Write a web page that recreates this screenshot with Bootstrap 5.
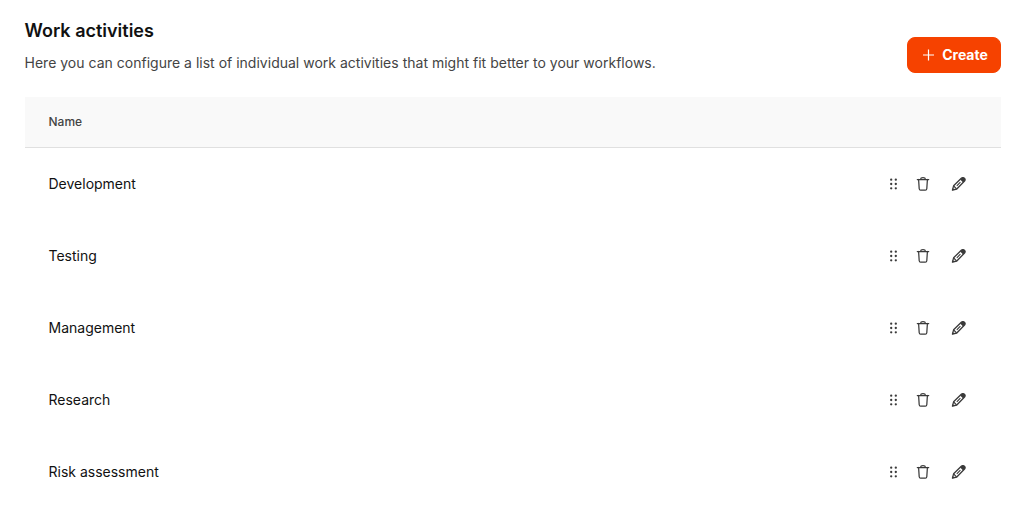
<!DOCTYPE html>
<html lang="en">
<head>
    <meta charset="UTF-8">
    <meta name="viewport" content="width=device-width, initial-scale=1">
    <title>Work activities</title>
    <link href="https://cdn.jsdelivr.net/npm/bootstrap@5.3.3/dist/css/bootstrap.min.css" rel="stylesheet">
    <style>
        body {
            font-family: Inter, sans-serif;
            font-size: 14px;
            line-height: 20px;
            color: #111;
            background-color: #fff;
            overflow: hidden;
        }

        .page {
            padding: 19px 32px 0 24.5px;
        }

        .page-title {
            font-size: 18px;
            line-height: 24px;
            font-weight: 600;
            margin-bottom: 10px;
        }

        .page-text {
            color: #444;
            letter-spacing: .01px;
        }

        .btn-create {
            --bs-btn-color: #fff;
            --bs-btn-bg: #f64200;
            --bs-btn-border-color: #f64200;
            --bs-btn-hover-color: #fff;
            --bs-btn-hover-bg: #de3e00;
            --bs-btn-border-radius: 8px;
            --bs-btn-font-weight: 700;
            width: 94px;
            height: 36px;
            padding: 0 0 2px 2px;
            font-size: 14px;
            margin-top: 18px;
        }

        .btn-create svg {
            margin-top: 1px;
        }

        .list-head {
            height: 51px;
            background-color: #f9f9f9;
            border-bottom: 1px solid #e0e0e0;
            font-size: 12px;
            font-weight: 500;
            color: #444;
        }

        .list-line {
            height: 72px;
        }

        .line-icons {
            color: #3a3a3a;
            padding-right: 10px;
        }

        .icon-grip {
            margin-right: 13px;
        }

        .icon-trash {
            margin-right: 20px;
        }
    </style>
</head>
<body>

<!-- Icon shapes used in every row -->
<svg class="d-none">
    <symbol id="grip" viewBox="0 0 16 16">
        <g fill="currentColor">
            <circle cx="5.2" cy="3.7" r="1.15"/><circle cx="9.8" cy="3.7" r="1.15"/>
            <circle cx="5.2" cy="8" r="1.15"/><circle cx="9.8" cy="8" r="1.15"/>
            <circle cx="5.2" cy="12.3" r="1.15"/><circle cx="9.8" cy="12.3" r="1.15"/>
        </g>
    </symbol>
    <symbol id="trash" viewBox="0 0 16 16">
        <path d="M2.3 3.5h11.4M5.4 3.5C5.6 2.2 6.500 1.600 8 1.600s2.400.6 2.600 1.900M3.600 3.500l.6 9.300c.1.900.6 1.400 1.400 1.400h4.800c.8 0 1.300-.5 1.400-1.400l.6-9.300" fill="none" stroke="currentColor" stroke-width="1.25" stroke-linecap="round"/>
    </symbol>
    <symbol id="pencil" viewBox="0 0 16 16">
        <g transform="translate(-.4 0)">
            <path d="M1.800 14.200l1.200-4.400 7.700-7.500c.9-.9 2-1 2.800-.2l.4.400c.8.8.7 1.900-.2 2.800l-7.500 7.700z" fill="none" stroke="currentColor" stroke-width="1.3" stroke-linejoin="round"/>
            <path d="M1.500 14.500l.7-2.500 1.800 1.800zM9.600 3.500l1.700-1.700c.8-.8 1.900-.8 2.700 0l.2.200c.8.8.8 1.900 0 2.700l-1.700 1.700z" fill="currentColor"/>
            <path d="M3.100 10l2.900 2.900M6.200 9.800l3.600-3.600" fill="none" stroke="currentColor" stroke-width="1.1"/>
        </g>
    </symbol>
</svg>

<main class="page">
    <header class="d-flex justify-content-between align-items-start">
        <div>
            <h1 class="page-title">Work activities</h1>
            <p class="page-text mb-0">Here you can configure a list of individual work activities that might fit better to your workflows.</p>
        </div>
        <button type="button" class="btn btn-create d-flex align-items-center justify-content-center gap-2">
            <svg width="12" height="12" viewBox="0 0 12 12"><path d="M6.500.5v11M1 6h11" stroke="currentColor" stroke-width="1.2"/></svg>
            Create
        </button>
    </header>

    <section class="mt-4">
        <div class="list-head d-flex align-items-center px-4">Name</div>
        <div id="activityList"></div>
    </section>
</main>

<script src="https://cdn.jsdelivr.net/npm/bootstrap@5.3.3/dist/js/bootstrap.bundle.min.js"></script>
<script>
    const activities = ["Development", "Testing", "Management", "Research", "Risk assessment"];
    const activityList = document.getElementById("activityList");

    activities.forEach(name => {
        activityList.innerHTML += `
            <div class="list-line d-flex align-items-center justify-content-between px-4">
                <span>${name}</span>
                <div class="line-icons d-flex align-items-center">
                    <svg class="icon-grip" width="16" height="16"><use href="#grip"/></svg>
                    <svg class="icon-trash" width="16" height="16"><use href="#trash"/></svg>
                    <svg width="16" height="16"><use href="#pencil"/></svg>
                </div>
            </div>`;
    });
</script>
</body>
</html>
